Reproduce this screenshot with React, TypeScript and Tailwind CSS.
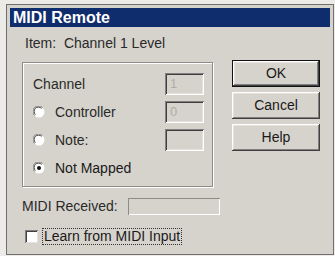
import React from "react";

const btnStyle =
  "flex items-center justify-center text-[14px] text-[#1a1a1a] bg-[#d6d3cc] shadow-[inset_-1px_-1px_#404040,inset_1px_1px_#ffffff,inset_-2px_-2px_#808080,inset_2px_2px_#e4e2dd]";

const field =
  "w-[39px] h-[22px] bg-[#d6d3cc] flex items-center pl-[5px] text-[13px] text-[#b0ada6] shadow-[inset_1px_1px_#808080,inset_-1px_-1px_#ffffff,inset_2px_2px_#404040,inset_-2px_-2px_#e4e2dd]";

function Radio({ checked }: { checked?: boolean }) {
  return (
    <svg width="12" height="12" viewBox="0 0 12 12" className="shrink-0">
      <circle cx="6" cy="6" r="5.5" fill="#ffffff" />
      <path d="M1.5 9.5 A5.5 5.5 0 0 1 9.5 1.5" stroke="#808080" strokeWidth="1" fill="none" />
      <path d="M2.4 8.6 A4.3 4.3 0 0 1 8.6 2.4" stroke="#404040" strokeWidth="1" fill="none" />
      {checked && <circle cx="6" cy="6" r="2" fill="#111" />}
    </svg>
  );
}

export default function App() {
  return (
    <div className="w-[335px] h-[256px] bg-[#ecebe8] pt-[4px] pl-[6px] font-['Liberation_Sans',Arial,sans-serif]">
      <div className="w-[328px] h-[251px] bg-[#d6d3cc] border border-[#707070] p-[3px] flex flex-col">
        <div className="h-[19px] bg-[#0f2c6d] flex items-center pl-[3px] text-white font-bold text-[16px]">
          MIDI Remote
        </div>
        <div className="flex pl-[12px]">
          <div className="w-[198px] flex flex-col">
            <div className="mt-[8px] pl-[3px] h-[16px] leading-[16px] text-[14px] text-[#2a2a2a]">
              Item:&nbsp; Channel 1 Level
            </div>
            <div className="mt-[11px] w-[191px] h-[125px] border border-[#8f8c86] shadow-[inset_1px_1px_#ffffff,1px_1px_#ffffff] pt-[10px] pl-[10px] pr-[8px] flex flex-col gap-[6px]">
              <div className="h-[22px] flex items-center justify-between">
                <span className="text-[14px] text-[#2a2a2a]">Channel</span>
                <div className={field}>1</div>
              </div>
              <div className="h-[22px] flex items-center justify-between">
                <div className="flex items-center gap-[10px]">
                  <Radio />
                  <span className="text-[14px] text-[#2a2a2a]">Controller</span>
                </div>
                <div className={field}>0</div>
              </div>
              <div className="h-[22px] flex items-center justify-between">
                <div className="flex items-center gap-[10px]">
                  <Radio />
                  <span className="text-[14px] text-[#2a2a2a]">Note:</span>
                </div>
                <div className={field}></div>
              </div>
              <div className="h-[22px] flex items-center">
                <div className="flex items-center gap-[10px]">
                  <Radio checked />
                  <span className="text-[14px] text-[#1a1a1a]">Not Mapped</span>
                </div>
              </div>
            </div>
            <div className="mt-[11px] h-[17px] flex items-center justify-between">
              <span className="text-[14px] text-[#2a2a2a]">MIDI Received:</span>
              <div className="w-[92px] h-[17px] bg-[#d6d3cc] shadow-[inset_1px_1px_#8f8c86,inset_-1px_-1px_#ffffff]"></div>
            </div>
            <div className="mt-[13px] pl-[3px] h-[17px] flex items-center gap-[4px]">
              <div className="w-[13px] h-[13px] bg-white shadow-[inset_1px_1px_#808080,inset_-1px_-1px_#e4e2dd,inset_2px_2px_#404040]"></div>
              <span className="text-[14px] leading-[15px] text-[#1a1a1a] border border-dotted border-[#333] px-[1px]">
                Learn from MIDI Input
              </span>
            </div>
          </div>
          <div className="ml-[12px] mt-[33px] flex flex-col gap-[5px]">
            <div className="border border-[#111]">
              <div className={`w-[86px] h-[25px] ${btnStyle}`}>OK</div>
            </div>
            <div className={`w-[88px] h-[27px] ${btnStyle}`}>Cancel</div>
            <div className={`w-[88px] h-[27px] ${btnStyle}`}>Help</div>
          </div>
        </div>
      </div>
    </div>
  );
}
